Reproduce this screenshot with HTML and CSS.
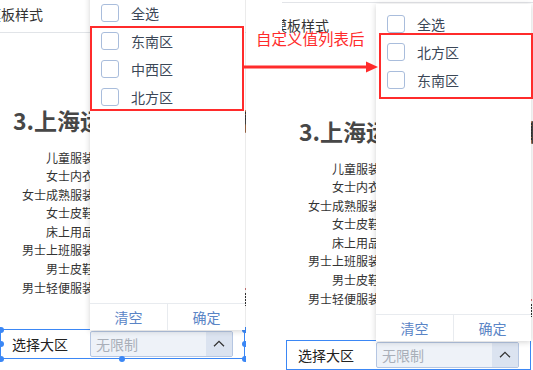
FILE: index.html
```html
<!DOCTYPE html>
<html lang="zh">
<head>
<meta charset="utf-8">
<title>自定义值列表</title>
<link rel="stylesheet" href="styles.css">
</head>
<body>
<div class="canvas">
  <section class="shot shot-l">
    <div class="stage">
      <div class="tab">模板样式</div>
      <h1 class="title">3.上海运动服饰销售分析</h1>
      <ul class="cats">
        <li>儿童服装</li><li>女士内衣</li><li>女士成熟服装</li><li>女士皮鞋</li>
        <li>床上用品</li><li>男士上班服装</li><li>男士皮鞋</li><li>男士轻便服装</li>
      </ul>
      <div class="filter">
        <span class="filter-label">选择大区</span>
        <div class="select">
          <span class="select-value">无限制</span>
          <span class="select-btn"><svg width="12" height="7" viewBox="0 0 12 7"><polyline points="1,6.3 6,1.3 11,6.3" fill="none" stroke="#333" stroke-width="1.3"/></svg></span>
        </div>
      </div>
      <span class="handle h1"></span><span class="handle h2"></span><span class="handle h3"></span>
      <span class="handle h4"></span><span class="handle h5"></span><span class="handle h6"></span><span class="handle h7"></span>
      <span class="peek peek-a"></span><span class="peek peek-b"></span><span class="peek peek-c"></span>
      <div class="dropdown">
        <ul class="opts">
          <li class="opt"><span class="cb"></span>全选</li>
          <li class="opt"><span class="cb"></span>东南区</li>
          <li class="opt"><span class="cb"></span>中西区</li>
          <li class="opt"><span class="cb"></span>北方区</li>
        </ul>
        <div class="dd-foot"><button class="dd-btn">清空</button><button class="dd-btn">确定</button></div>
      </div>
      <div class="mark mark-l"></div>
    </div>
  </section>

  <section class="shot shot-r">
    <div class="rule"></div>
    <div class="stage">
      <div class="tab">模板样式</div>
      <h1 class="title">3.上海运动服饰销售分析</h1>
      <ul class="cats">
        <li>儿童服装</li><li>女士内衣</li><li>女士成熟服装</li><li>女士皮鞋</li>
        <li>床上用品</li><li>男士上班服装</li><li>男士皮鞋</li><li>男士轻便服装</li>
      </ul>
      <div class="filter">
        <span class="filter-label">选择大区</span>
        <div class="select">
          <span class="select-value">无限制</span>
          <span class="select-btn"><svg width="12" height="7" viewBox="0 0 12 7"><polyline points="1,6.3 6,1.3 11,6.3" fill="none" stroke="#333" stroke-width="1.3"/></svg></span>
        </div>
      </div>
      <span class="peek peek-a peek-long"></span><span class="peek peek-b"></span><span class="peek peek-c"></span>
      <div class="dropdown">
        <ul class="opts">
          <li class="opt"><span class="cb"></span>全选</li>
          <li class="opt"><span class="cb"></span>北方区</li>
          <li class="opt"><span class="cb"></span>东南区</li>
        </ul>
        <div class="dd-foot"><button class="dd-btn">清空</button><button class="dd-btn">确定</button></div>
      </div>
      <div class="mark mark-r"></div>
    </div>
  </section>

  <p class="note">自定义值列表后</p>
  <svg class="arrow" width="136" height="18" viewBox="0 0 136 18">
    <line x1="0" y1="9" x2="124" y2="9" stroke="#ff2b2b" stroke-width="3"/>
    <polygon points="122,3.5 134,9 122,14.5" fill="#ff2b2b"/>
  </svg>
</div>
</body>
</html>
```

FILE: styles.css
```css
html, body {
  margin: 0;
  padding: 0;
  background: #fff;
}
body {
  width: 533px;
  height: 370px;
  overflow: hidden;
  font-family: "Noto Sans CJK SC", "Microsoft YaHei", sans-serif;
}
.canvas {
  position: relative;
  width: 533px;
  height: 370px;
}
.shot {
  position: absolute;
  top: 0;
  height: 370px;
  overflow: hidden;
  box-sizing: border-box;
}
.shot-l {
  left: 0;
  width: 246px;
}
.shot-r {
  left: 282px;
  width: 251px;
  padding: 2px 0 0 4px;
}
.rule {
  height: 1px;
  margin-left: -4px;
  background: #e2e4e8;
}
.shot-r .stage {
  margin-top: 8px;
}
.stage {
  position: relative;
}
.tab {
  height: 32px;
  margin-left: -13px;
  font-size: 14px;
  line-height: 28px;
  color: #333;
  white-space: nowrap;
  border-bottom: 1px solid transparent;
}
.shot-l .tab {
  border-bottom-color: #e1e4e8;
}
.title {
  margin: 73px 0 0 13px;
  font-size: 23px;
  line-height: 29px;
  font-weight: 700;
  color: #474747;
  white-space: nowrap;
}
.cats {
  list-style: none;
  margin: 13.5px 0 0;
  padding: 0;
  width: 94px;
  text-align: right;
  font-size: 12px;
  line-height: 18.6px;
  color: #333;
  white-space: nowrap;
}
.filter {
  display: flex;
  align-items: flex-start;
  width: 245px;
  height: 30px;
  margin-top: 31.5px;
  box-sizing: border-box;
  border: 1px solid #3b87f5;
  padding-top: 1px;
}
.filter-label {
  width: 89px;
  padding-left: 11px;
  box-sizing: border-box;
  font-size: 14px;
  line-height: 26px;
  color: #222;
  white-space: nowrap;
}
.select {
  display: flex;
  width: 143px;
  height: 26px;
  box-sizing: border-box;
  border: 1px solid #b5c6e2;
  border-radius: 2px;
  background: #eef2f8;
  overflow: hidden;
}
.select-value {
  flex: 1;
  padding-left: 5px;
  font-size: 14px;
  line-height: 24px;
  color: #a9afb9;
}
.select-btn {
  width: 26px;
  display: flex;
  align-items: center;
  justify-content: center;
  background: #dbe3f0;
}
.handle {
  position: absolute;
  width: 6px;
  height: 6px;
  margin: -3px 0 0 -3px;
  border-radius: 50%;
  background: #3b87f5;
  z-index: 1;
}
.h1 { left: 0.5px; top: 329.5px; }
.h2 { left: 0.5px; top: 344px; }
.h3 { left: 0.5px; top: 358.5px; }
.h4 { left: 122px; top: 358.5px; }
.h5 { left: 245px; top: 329.5px; }
.h6 { left: 245px; top: 344px; }
.h7 { left: 245px; top: 358.5px; }
.peek {
  position: absolute;
  left: 245px;
  width: 1px;
}
.peek-a, .peek-c {
  background: repeating-linear-gradient(#333 0 2px, transparent 2px 3px);
}
.peek-a { top: 112px; height: 9px; }
.peek-long { height: 17px; }
.peek-b { top: 288px; height: 2px; background: #c77; }
.peek-c { top: 293px; height: 13px; }
.dropdown {
  position: absolute;
  left: 90px;
  top: -7px;
  width: 155px;
  height: 337px;
  display: flex;
  flex-direction: column;
  background: #fff;
  box-shadow: 0 1px 6px rgba(0, 0, 0, 0.18);
  z-index: 2;
}
.opts {
  flex: 1;
  list-style: none;
  margin: 0;
  padding: 6px 0 0;
}
.opt {
  height: 28px;
  display: flex;
  align-items: center;
  font-size: 14px;
  color: #3b4757;
  white-space: nowrap;
}
.cb {
  width: 18px;
  height: 18px;
  box-sizing: border-box;
  margin: 0 12px 0 11px;
  border: 1px solid #a9bddc;
  border-radius: 3px;
  background: #fff;
}
.dd-foot {
  display: flex;
  height: 26px;
  border-top: 1px solid #e8ebef;
}
.dd-btn {
  flex: 1;
  padding: 0;
  border: 0;
  background: none;
  font-family: inherit;
  font-size: 14px;
  line-height: 26px;
  color: #5a85c6;
}
.dd-btn + .dd-btn {
  border-left: 1px solid #e8ebef;
}
.mark {
  position: absolute;
  box-sizing: border-box;
  border: 2px solid #ff2b2b;
  z-index: 3;
}
.mark-l { left: 90px; top: 26px; width: 154px; height: 85px; }
.mark-r { left: 93px; top: 22px; width: 154px; height: 66px; }
.note {
  position: absolute;
  left: 256px;
  top: 28px;
  margin: 0;
  font-size: 15.5px;
  line-height: 20px;
  color: #ff2b2b;
  white-space: nowrap;
  z-index: 5;
}
.arrow {
  position: absolute;
  left: 244px;
  top: 58px;
  z-index: 5;
}
```
